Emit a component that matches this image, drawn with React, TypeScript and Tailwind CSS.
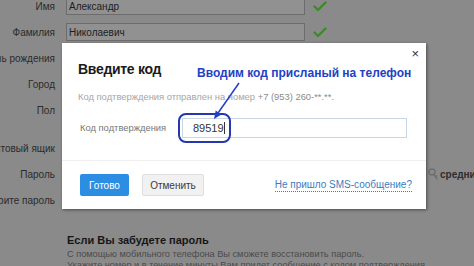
import React from "react";

const font = { fontFamily: '"Liberation Sans", Arial, sans-serif' };

function Check() {
  return (
    <svg width="14" height="11" viewBox="0 0 14 11" className="shrink-0">
      <path d="M1.5 5.5 L5 9 L12.5 1.5" fill="none" stroke="#3d8a2c" strokeWidth="2.4" strokeLinecap="round" strokeLinejoin="round" />
    </svg>
  );
}

function Key() {
  return (
    <svg width="10" height="12" viewBox="0 0 10 12" className="shrink-0">
      <circle cx="4" cy="4" r="3" fill="none" stroke="#6e6e6e" strokeWidth="1.4" />
      <path d="M5.8 6.2 L9 11 M7.4 8.6 L8.8 7.8" fill="none" stroke="#6e6e6e" strokeWidth="1.4" strokeLinecap="round" />
    </svg>
  );
}

function Row({ label, value, check, extra }: { label: string; value?: string; check?: boolean; extra?: React.ReactNode }) {
  return (
    <div className="flex items-center h-[26px]">
      <div className="w-[55px] flex justify-end shrink-0">
        <span className="whitespace-nowrap text-[10px] text-[#2b2b2b]">{label}</span>
      </div>
      <div className="ml-[11px] w-[239px] h-[18px] shrink-0 bg-[#919191] border border-[#6c6c6c] flex items-center px-[2px] text-[10px] text-[#1e1e1e]">
        {value}
      </div>
      <div className="ml-[8px] w-[14px] shrink-0">{check && <Check />}</div>
      {extra}
    </div>
  );
}

export default function App() {
  return (
    <div className="relative w-[474px] h-[266px] overflow-hidden bg-[#8a8a8a]" style={font}>
      {/* background form */}
      <div className="flex flex-col mt-[-7px]">
        <Row label="Имя" value="Александр" check />
        <Row label="Фамилия" value="Николаевич" check />
        <Row label="День рождения" />
        <Row label="Город" />
        <Row label="Пол" />
        <div className="h-[12px]" />
        <Row label="Почтовый ящик" />
        <Row
          label="Пароль"
          extra={
            <div className="ml-[101px] flex items-center gap-[2px] shrink-0">
              <Key />
              <span className="text-[10px] font-bold text-[#2e2e2e] whitespace-nowrap">средний</span>
            </div>
          }
        />
        <Row label="Повторите пароль" />
        <div className="ml-[67px] mt-[20px]">
          <div className="text-[11px] leading-[14px] font-bold text-[#161616]">Если Вы забудете пароль</div>
          <div className="mt-[2px] text-[9.2px] leading-[11px] text-[#4a4a4a] whitespace-nowrap">
            С помощью мобильного телефона Вы сможете восстановить пароль.
            <br />
            Укажите номер и в течение минуты Вам придет сообщение с кодом подтверждения.
          </div>
        </div>
      </div>

      {/* modal */}
      <div className="absolute left-[62px] top-[43px] w-[364px] h-[166px] bg-white shadow-[1px_1px_3px_rgba(0,0,0,0.45)] flex flex-col">
        <div className="absolute right-[7px] top-[4px] text-[13px] leading-[13px] text-[#333]">×</div>
        <div className="px-[16px] pt-[16px]">
          <div className="text-[14px] leading-[20px] font-bold tracking-[-0.3px] text-[#1a1a1a]">Введите код</div>
          <div className="mt-[11px] text-[9.4px] leading-[14px] text-[#a6a6a6] whitespace-nowrap">
            Код подтверждения отправлен на номер <span className="text-[#8a8a8a]">+7 (953) 260-**.**.</span>
          </div>
          <div className="mt-[14px] flex items-center h-[20px]">
            <span className="pl-[2px] w-[104px] text-[9.4px] text-[#777]">Код подтверждения</span>
            <div className="w-[225px] h-[20px] border border-[#c9d6e3] flex items-center pl-[10px] text-[11px] text-[#333]">
              89519<span className="inline-block w-px h-[12px] bg-[#333]" />
            </div>
          </div>
        </div>
        <div className="mt-[22px] h-px bg-[#f0f0f0]" />
        <div className="flex items-center pl-[18px] pr-[14px] pt-[13px]">
          <div className="w-[49px] h-[22px] rounded-[2px] bg-[#2b8ee2] text-white text-[10px] flex items-center justify-center">Готово</div>
          <div className="ml-[13px] w-[62px] h-[22px] rounded-[2px] bg-[#f1f1f1] border border-[#dedede] text-[#3a3a3a] text-[10px] flex items-center justify-center">Отменить</div>
          <div className="ml-auto text-[10px] leading-[12px] text-[#3b7cc0] border-b border-dotted border-[#3b7cc0]">Не пришло SMS-сообщение?</div>
        </div>
      </div>

      {/* annotation */}
      <div className="absolute left-[178px] top-[113px] w-[53px] h-[30px] rounded-[8px] border-2 border-[#2436b0]" />
      <div className="absolute left-[197px] top-[65px] text-[12px] leading-[16px] font-bold text-[#2340c4] whitespace-nowrap">
        Вводим код присланый на телефон
      </div>
      <svg className="absolute left-0 top-0" width="474" height="266">
        <line x1="239" y1="83" x2="217" y2="114.5" stroke="#2340c4" strokeWidth="1.5" />
        <polygon points="214,119 221.4,114.4 215.7,110.4" fill="#2340c4" />
      </svg>
    </div>
  );
}
